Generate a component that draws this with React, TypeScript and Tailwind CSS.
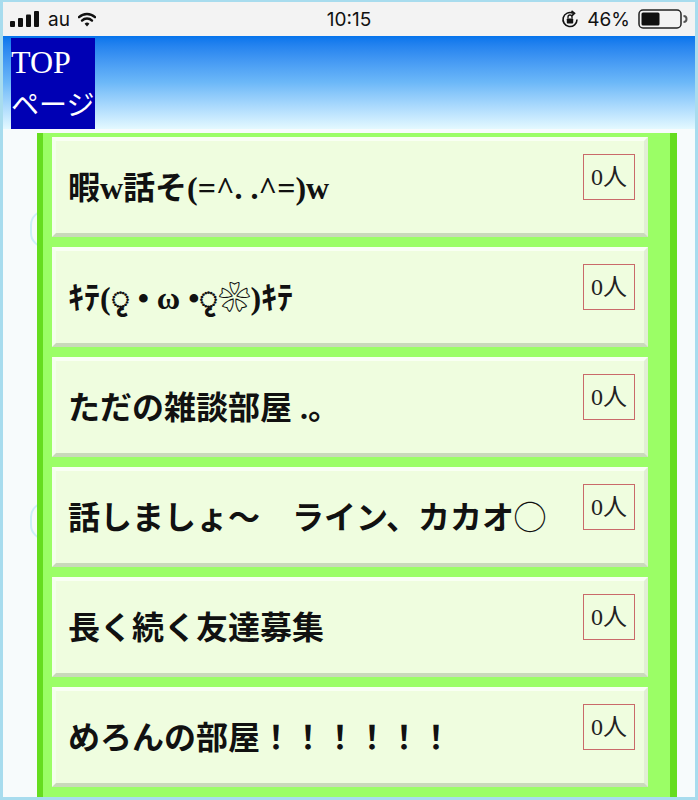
import React from 'react'

const rooms = [
  '暇w話そ(=^. .^=)w',
  'ｷﾃ(ृ • ω •ृ❀)ｷﾃ',
  'ただの雑談部屋 .。',
  '話しましょ〜　ライン、カカオ◯',
  '長く続く友達募集',
  'めろんの部屋！！！！！！',
]

const serif = { fontFamily: '"Liberation Serif", "Noto Sans CJK JP", serif' }

function StatusBar() {
  return (
    <div
      className="h-[34px] bg-[#f3f3f3] flex items-center px-[7px] text-[19px] text-[#111]"
      style={{ fontFamily: 'Inter, "Liberation Sans", sans-serif' }}
    >
      <div className="flex items-center w-[200px] gap-[8px]">
        <svg width="30" height="16" viewBox="0 0 30 16">
          <rect x="0" y="10" width="5" height="6" rx="1" fill="#111" />
          <rect x="8" y="7" width="5" height="9" rx="1" fill="#111" />
          <rect x="16" y="3.5" width="5" height="12.5" rx="1" fill="#111" />
          <rect x="24" y="0" width="5" height="16" rx="1" fill="#111" />
        </svg>
        <span className="leading-none">au</span>
        <svg width="18" height="15" viewBox="0 0 18 15">
          <path d="M1 5.2 A11.5 11.5 0 0 1 17 5.2" stroke="#111" strokeWidth="2.4" fill="none" strokeLinecap="round" />
          <path d="M4 8.6 A7 7 0 0 1 14 8.6" stroke="#111" strokeWidth="2.4" fill="none" strokeLinecap="round" />
          <path d="M6.6 11.8 L9 14.4 L11.4 11.8 A3.4 3.4 0 0 0 6.6 11.8 Z" fill="#111" />
        </svg>
      </div>
      <div className="flex-1 text-center leading-none">10:15</div>
      <div className="w-[200px] flex items-center justify-end gap-[8px]">
        <svg width="18" height="19" viewBox="0 0 18 19">
          <path d="M16 9.5 A7 7 0 1 1 12 3.2" stroke="#111" strokeWidth="1.6" fill="none" />
          <path d="M10.5 1 L13.5 3.3 L10.8 5.8" stroke="#111" strokeWidth="1.6" fill="none" />
          <rect x="5.8" y="8.5" width="6.4" height="5" rx="0.8" fill="#111" />
          <path d="M7 8.5 V7 A2 2 0 0 1 11 7 V8.5" stroke="#111" strokeWidth="1.3" fill="none" />
        </svg>
        <span className="leading-none">46%</span>
        <svg width="50" height="20" viewBox="0 0 50 20">
          <rect x="1" y="1" width="42" height="18" rx="4" stroke="#222" strokeWidth="1.5" fill="none" />
          <rect x="3.5" y="3.5" width="18" height="13" rx="1.5" fill="#111" />
          <path d="M45.5 7 A3 3 0 0 1 45.5 13" stroke="#555" strokeWidth="2" fill="none" />
        </svg>
      </div>
    </div>
  )
}

function RoomCard({ name }: { name: string }) {
  return (
    <div className="h-[100px] flex bg-[#effddf] border-[4px] border-t-[#f9fff3] border-l-[#f5ffec] border-r-[#e2eed5] border-b-[#c9d9ba] pl-[12px] pr-[9px]">
      <div className="flex-1 flex items-center pt-[2px]">
        <span className="text-[32px] font-semibold text-[#111] whitespace-nowrap" style={serif}>
          {name}
        </span>
      </div>
      <div
        className="self-start mt-[13px] w-[52px] h-[46px] border border-[#c96a6a] flex items-center justify-center text-[24px] text-[#222]"
        style={serif}
      >
        0人
      </div>
    </div>
  )
}

export default function App() {
  return (
    <div className="h-[800px] overflow-hidden border-[3px] border-t-[2px] border-[#a8dcee] bg-[#f7fbfc] relative">
      <StatusBar />
      <div className="h-[93px] bg-linear-to-b from-[#0474ec] via-[#6cb8f8] to-[#e4f9ff] pl-[8px] pt-[2px]">
        <div className="w-[84px] h-[91px] bg-[#0000b4] text-white text-[28px] leading-[44px] pt-[2px]" style={serif}>
          <div className="text-[32px]">TOP</div>
          <div className="whitespace-nowrap">ページ</div>
        </div>
      </div>
      <div className="absolute left-[27px] top-[208px] w-[30px] h-[38px] rounded-full border-2 border-[#cdeffa]" />
      <div className="absolute left-[27px] top-[500px] w-[30px] h-[38px] rounded-full border-2 border-[#cdeffa]" />
      <div className="relative ml-[34px] mt-[4px] w-[640px] border-l-[6px] border-r-[7px] border-[#66dd1f] bg-[#9bfe66] pl-[9px] pr-[22px] pt-[4px] pb-[10px] flex flex-col gap-[10px]">
        {rooms.map((r, i) => (
          <RoomCard key={i} name={r} />
        ))}
      </div>
    </div>
  )
}
